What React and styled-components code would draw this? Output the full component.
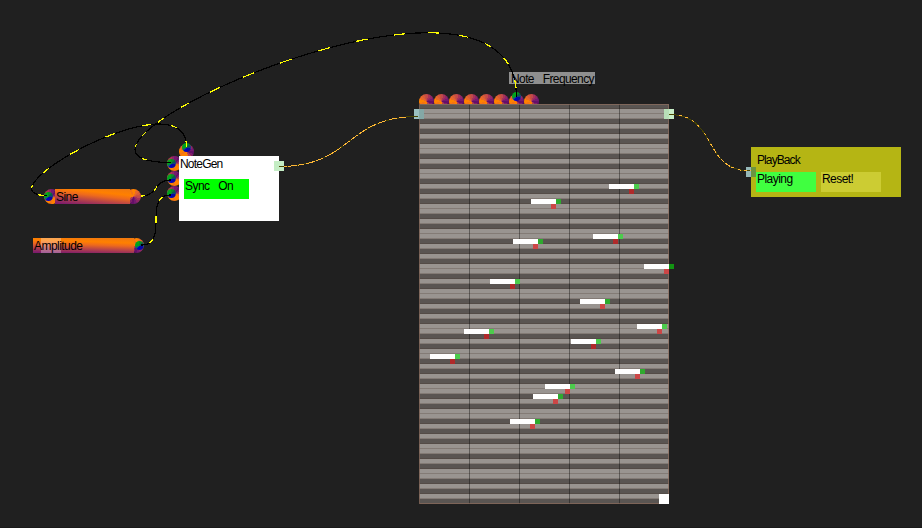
import React from "react";
import styled, { createGlobalStyle } from "styled-components";

const GlobalStyle = createGlobalStyle`
  * { box-sizing: border-box; }
  body { margin: 0; background: #202020; overflow: hidden; }
`;

const Canvas = styled.main`
  position: relative;
  width: 922px;
  height: 528px;
  overflow: hidden;
  background: #202020;
  border-bottom: 1px solid #1a1a1a;
  color: #000;
  font: 12px/12px "Liberation Sans", sans-serif;
`;

const Node = styled.section`
  position: absolute;
  left: ${(p) => p.$x}px;
  top: ${(p) => p.$y}px;
  display: flex;
  flex-direction: ${(p) => p.$direction || "row"};
`;

const NodeBody = styled.div`
  display: flex;
`;

const Panel = styled.div`
  width: ${(p) => p.$w}px;
  height: ${(p) => p.$h}px;
  display: flex;
  flex-direction: column;
  align-items: flex-start;
  gap: ${(p) => p.$gap}px;
  padding: ${(p) => p.$pad};
  background: ${(p) => p.$bg};
`;

const Label = styled.span`
  display: block;
  height: 12px;
  white-space: pre;
  letter-spacing: ${(p) => p.$track || -0.55}px;
  word-spacing: ${(p) => p.$word || 0}px;
`;

const Title = styled(Label)`
  margin-left: ${(p) => p.$shift}px;
`;

const ButtonRow = styled.div`
  display: flex;
  gap: 5px;
`;

const Button = styled.button`
  width: ${(p) => p.$w}px;
  height: 20px;
  padding: 1px;
  border: 0;
  display: flex;
  align-items: flex-start;
  background: ${(p) => p.$bg};
  color: inherit;
  font: inherit;
`;

const KnobStrip = styled.div`
  display: flex;
  flex: none;
  flex-direction: ${(p) => p.$direction || "row"};
  width: ${(p) => p.$w}px;
  height: ${(p) => p.$h}px;
  overflow: hidden;
  justify-content: ${(p) => p.$justify || "flex-start"};
`;

const TopKnob = styled(KnobStrip)`
  align-self: flex-start;
  margin-left: 12px;
`;

const Knob = styled.i`
  flex: none;
  width: 15px;
  height: 15px;
  border-radius: 50%;
  background: conic-gradient(
    from ${(p) => p.$turn || 0}deg,
    #c24a4a 0 15deg, #a83258 15deg 38deg, #8e2668 38deg 60deg,
    #741a70 60deg 88deg, #641068 88deg 110deg, #80206a 110deg 135deg,
    #b04050 135deg 158deg, #e86a20 158deg 180deg, #ff8000 180deg 235deg,
    #f47414 235deg 258deg, #ff8200 258deg 290deg, #e86828 290deg 318deg,
    #d85c38 318deg 340deg, #cc503c 340deg 360deg
  );
`;

const Plug = styled.i`
  position: absolute;
  left: ${(p) => p.$x}px;
  top: ${(p) => p.$y}px;
  width: 9px;
  height: 9px;
  border-radius: 50%;
  background: conic-gradient(
    #0a8a28 0 40deg, #086048 40deg 75deg, #104080 75deg 105deg,
    #0808a0 105deg 170deg, #0000c0 170deg 215deg, #105878 215deg 250deg,
    #00a020 250deg 325deg, #00b010 325deg 360deg
  );
`;

const Port = styled.i`
  position: absolute;
  left: ${(p) => p.$x}px;
  top: ${(p) => p.$y}px;
  width: 10px;
  height: 10px;
  background: ${(p) => p.$bg};
`;

const Bar = styled.div`
  width: ${(p) => p.$w}px;
  height: 15px;
  padding: 2px 1px;
  background: ${(p) => p.$glow || "linear-gradient(transparent, transparent)"},
    linear-gradient(
      ${(p) => p.$angle}deg,
      #f07810 0%, #ff8000 28%, #ee6a1c 45%, #b84448 68%, #7c1c6c 95%
    );
`;

const glow = "linear-gradient(rgba(255,255,255,.3), rgba(255,255,255,.3)) 8px 0 / 20px 15px no-repeat";

const Roll = styled.div`
  position: relative;
  width: 250px;
  height: 400px;
  background:
    linear-gradient(90deg, rgba(0, 0, 0, 0.38) 1px, transparent 1px) 50px 0 / 50px 100%,
    repeating-linear-gradient(transparent 0 4px, rgba(66, 48, 38, 0.25) 4px 5px),
    repeating-linear-gradient(
      #5a5552 0 5px, #999490 5px 10px, #5a5552 10px 15px, #999490 15px 20px,
      #5a5552 20px 25px, #999490 25px 35px, #5a5552 35px 40px,
      #999490 40px 45px, #5a5552 45px 50px, #999490 50px 60px
    ) 0 -45px / 100% 460px;
  border: 1px solid rgba(143, 111, 96, 0.7);
  background-origin: border-box;
`;

const Note = styled.i`
  position: absolute;
  left: ${(p) => p.$x - 420}px;
  top: ${(p) => p.$y - 105}px;
  width: 30px;
  display: flex;
  flex-direction: column;
  &::before {
    content: "";
    height: 5px;
    background: linear-gradient(90deg, #fff 25px, ${(p) => p.$end} 25px);
  }
  &::after {
    content: "";
    width: 5px;
    height: 5px;
    margin-left: 20px;
    background: ${(p) => p.$foot};
  }
`;

const Grip = styled.i`
  position: absolute;
  right: -1px;
  bottom: -1px;
  width: 10px;
  height: 10px;
  background: #fff;
`;

const Tooltip = styled.div`
  position: absolute;
  left: 509px;
  top: 72px;
  width: 86px;
  height: 12px;
  padding: 1px 0 0 2px;
  background: #8f8f8f;
`;

const Wires = styled.svg`
  position: absolute;
  inset: 0;
  pointer-events: none;
  fill: none;
  shape-rendering: crispEdges;
`;

const notes = [
  [609, 184], [531, 199], [593, 234], [513, 239], [644, 264],
  [490, 279], [580, 299], [637, 324], [464, 329], [571, 339],
  [430, 354], [615, 369], [545, 384], [533, 394], [510, 419],
];

const darkRows = [0, 2, 4, 7, 9];
const isDark = (y) => darkRows.includes(((y - 104) / 5 + 9) % 12);

const series = (first, step, count) =>
  Array.from({ length: count }, (_, i) => first + i * step);

const cables = [
  { p: [[516.5, 97], [516.5, -79], [-4, 162.5], [171, 162.5]], marks: [...series(0.027, 0.0577, 15), 0.93], on: 0.018 },
  { p: [[47, 195.5], [-26, 195.5], [186.5, 75], [186.5, 147]], marks: series(0.03, 0.137, 8), on: 0.036 },
  { p: [[141, 196], [158, 196], [154, 180], [171, 180]], marks: [0.01, 0.47], on: 0.16 },
  { p: [[141, 245], [170, 245], [142, 195], [171, 195]], marks: [0.17, 0.51, 0.83], on: 0.1 },
];

const at = (p, t) => {
  const u = 1 - t;
  const mix = (k) =>
    u * u * u * p[0][k] + 3 * u * u * t * p[1][k] + 3 * u * t * t * p[2][k] + t * t * t * p[3][k];
  return `${mix(0).toFixed(2)},${mix(1).toFixed(2)}`;
};

const span = (p, from, to, n) =>
  Array.from({ length: n + 1 }, (_, i) => at(p, from + ((to - from) * i) / n)).join(" ");

function Cable({ p, marks, on }) {
  return (
    <g>
      <polyline points={span(p, 0, 1, 90)} stroke="#000" strokeWidth="1.2" />
      {marks.map((t) => (
        <polyline
          key={t}
          points={span(p, Math.max(0, t - on / 2), Math.min(1, t + on / 2), 4)}
          stroke="#ffff00"
          strokeWidth="1.2"
        />
      ))}
    </g>
  );
}

export default function App() {
  return (
    <>
      <GlobalStyle />
      <Canvas>
        <Node $x={44} $y={189}>
          <KnobStrip $w={11} $h={15}><Knob $turn={300} /></KnobStrip>
          <Bar $w={75} $angle={186}><Label>Sine</Label></Bar>
          <KnobStrip $w={11} $h={15} $justify="flex-end"><Knob $turn={90} /></KnobStrip>
          <Plug $x={0} $y={3} />
        </Node>

        <Node $x={33} $y={238}>
          <Bar $w={101} $angle={182} $glow={glow}><Label>Amplitude</Label></Bar>
          <KnobStrip $w={10} $h={15} $justify="flex-end"><Knob $turn={90} /></KnobStrip>
          <Plug $x={102} $y={3} />
        </Node>

        <Node $x={167} $y={144} $direction="column">
          <TopKnob $w={15} $h={12}><Knob /></TopKnob>
          <NodeBody>
            <KnobStrip $direction="column" $w={12} $h={65}>
              <Knob $turn={300} />
              <Knob $turn={300} />
              <Knob $turn={300} />
            </KnobStrip>
            <Panel $w={100} $h={65} $bg="#fff" $pad="2px 5px" $gap={9}>
              <Title $shift={-4} $track={-0.8}>NoteGen</Title>
              <Button $w={65} $bg="#00ff00"><Label $word={6}>Sync On</Label></Button>
            </Panel>
          </NodeBody>
          <Plug $x={15} $y={-1} />
          <Plug $x={0} $y={15} />
          <Plug $x={0} $y={30} />
          <Plug $x={0} $y={45} />
          <Port $x={107} $y={17} $bg="#c4edc4" />
        </Node>

        <Tooltip><Label $track={-0.6} $word={6}>Note Frequency</Label></Tooltip>

        <Node $x={419} $y={94} $direction="column">
          <KnobStrip $w={120} $h={10}>
            {Array.from({ length: 8 }, (_, i) => <Knob key={i} />)}
          </KnobStrip>
          <Roll>
            {notes.map(([x, y]) => (
              <Note
                key={`${x}-${y}`}
                $x={x}
                $y={y}
                $end={x === 644 ? "#129412" : isDark(y) ? "#2eaa2e" : "#4ccc4c"}
                $foot={isDark(y + 5) ? "#b02a2a" : "#cc4646"}
              />
            ))}
            <Grip />
          </Roll>
          <Plug $x={93} $y={-2} />
          <Port $x={-5} $y={15} $bg="linear-gradient(90deg, #9ac0c0 5px, #84a8a6 5px)" />
          <Port $x={245} $y={15} $bg="linear-gradient(90deg, #b8dfb8 5px, #c8f0c8 5px)" />
        </Node>

        <Node $x={751} $y={147}>
          <Panel $w={150} $h={50} $bg="#b5b514" $pad="7px 5px 5px" $gap={6}>
            <Title $shift={1} $track={-0.9}>PlayBack</Title>
            <ButtonRow>
              <Button $w={60} $bg="#40ff40"><Label>Playing</Label></Button>
              <Button $w={60} $bg="#cccc33"><Label>Reset!</Label></Button>
            </ButtonRow>
          </Panel>
          <Port $x={-5} $y={20} $bg="linear-gradient(90deg, #96b8b8 5px, #6c9440 5px)" />
        </Node>

        <Wires width="922" height="528" viewBox="0 0 922 528">
          {cables.map((c) => <Cable key={c.p[0].join()} {...c} />)}
          <path d="M279 166.5C353 166.5 345 116.5 418 116.5" stroke="#484400" />
          <path
            d="M279 166.5C353 166.5 345 116.5 418 116.5"
            stroke="#ffb836"
            strokeDasharray="0 5 3 1 9 1 6 2 9 1 8 2 10 1 8 2 9 2 8 2 9 2 8 2 9 3 8 2 7 300"
          />
          <path d="M669 114.5C719 114.5 701 171 751 171" stroke="#484400" />
          <path
            d="M669 114.5C719 114.5 701 171 751 171"
            stroke="#ffb836"
            strokeDasharray="0 10 3 3 3 5 2 5 2 8 3 4 3 3 4 2 5 2 4 2 4 2 5 2 3 4 3 3 3 3 3 2"
          />
        </Wires>
      </Canvas>
    </>
  );
}
